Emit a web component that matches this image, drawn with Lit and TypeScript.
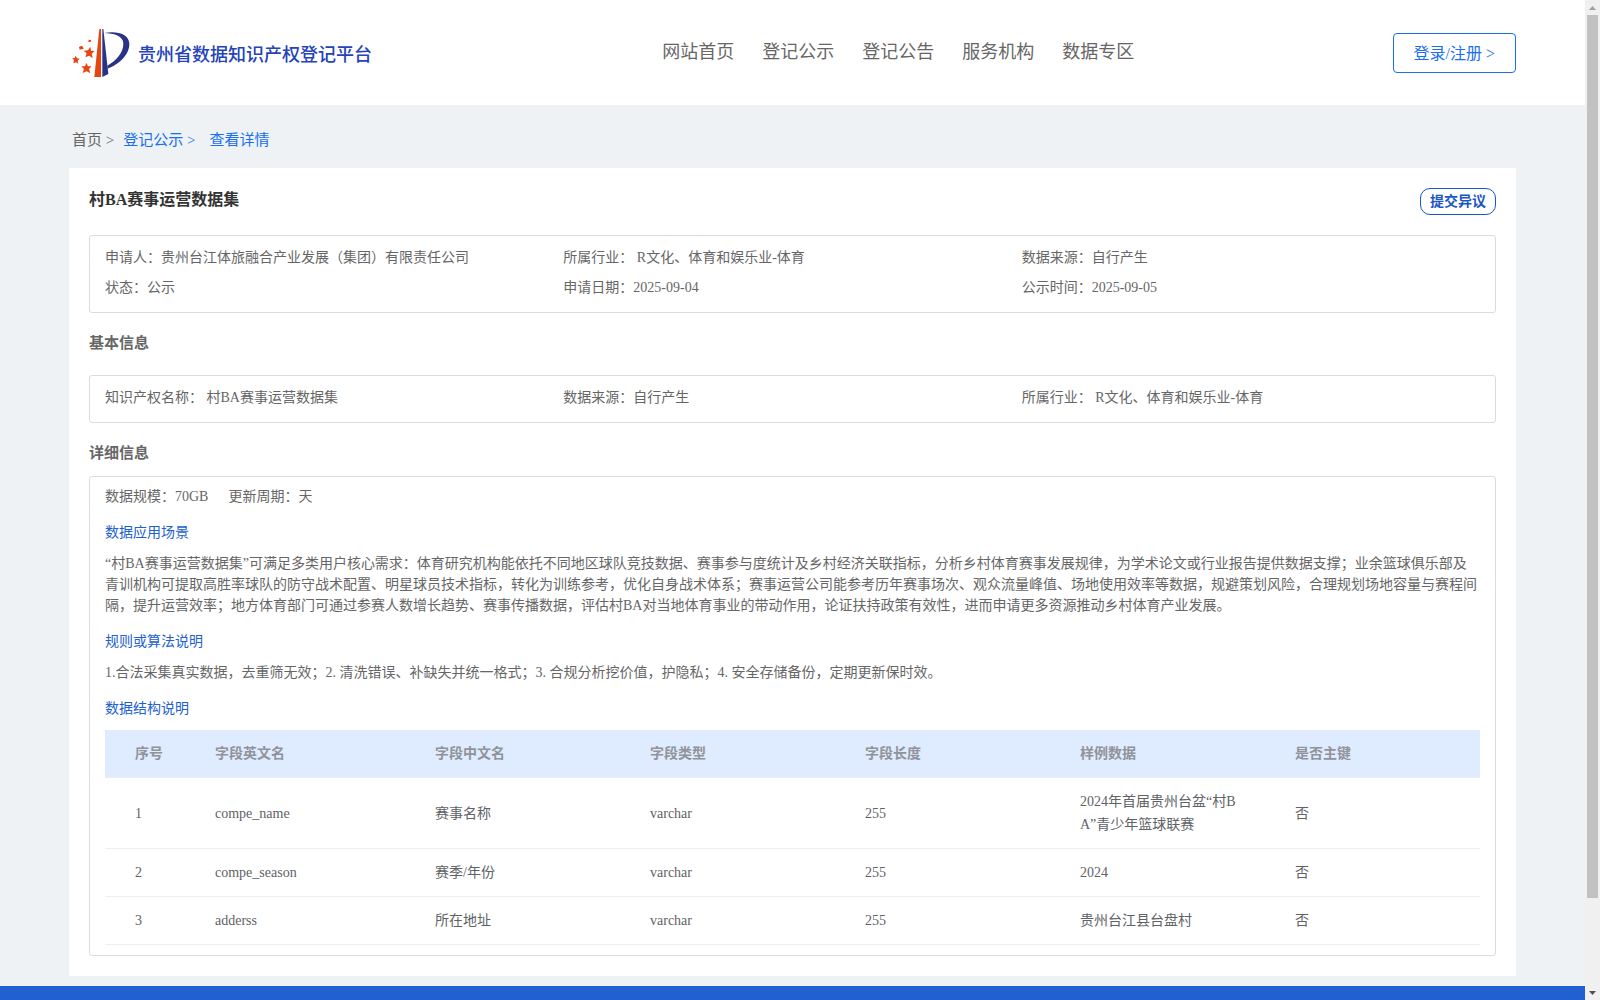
import { LitElement, html, css } from "lit";
import { customElement } from "lit/decorators.js";

interface Fact {
  label: string;
  value: string;
}

const NAV = ["网站首页", "登记公示", "登记公告", "服务机构", "数据专区"];

const SUMMARY: Fact[] = [
  { label: "申请人：", value: "贵州台江体旅融合产业发展（集团）有限责任公司" },
  { label: "所属行业：", value: " R文化、体育和娱乐业-体育" },
  { label: "数据来源：", value: "自行产生" },
  { label: "状态：", value: "公示" },
  { label: "申请日期：", value: "2025-09-04" },
  { label: "公示时间：", value: "2025-09-05" },
];

const BASIC: Fact[] = [
  { label: "知识产权名称：", value: " 村BA赛事运营数据集" },
  { label: "数据来源：", value: "自行产生" },
  { label: "所属行业：", value: " R文化、体育和娱乐业-体育" },
];

const COLUMNS = ["序号", "字段英文名", "字段中文名", "字段类型", "字段长度", "样例数据", "是否主键"];

const ROWS = [
  ["1", "compe_name", "赛事名称", "varchar", "255", "2024年首届贵州台盆“村BA”青少年篮球联赛", "否"],
  ["2", "compe_season", "赛季/年份", "varchar", "255", "2024", "否"],
  ["3", "adderss", "所在地址", "varchar", "255", "贵州台江县台盘村", "否"],
];

@customElement("fact-grid")
class FactGrid extends LitElement {
  static properties = { facts: { attribute: false } };
  declare facts: Fact[];

  static styles = css`
    :host {
      display: block;
      border: 1px solid #dcdcdc;
      border-radius: 3px;
      padding: 7px 15px 9px;
    }
    .facts {
      display: grid;
      grid-template-columns: repeat(3, 1fr);
      margin: 0;
      line-height: 30px;
      white-space: pre-wrap;
    }
    .fact {
      display: flex;
    }
    .label,
    .value {
      margin: 0;
    }
  `;

  render() {
    return html`<dl class="facts">
      ${this.facts.map(
        (f) => html`<div class="fact"><dt class="label">${f.label}</dt><dd class="value">${f.value}</dd></div>`
      )}
    </dl>`;
  }
}

@customElement("scroll-rail")
class ScrollRail extends LitElement {
  static styles = css`
    :host {
      display: flex;
      flex-direction: column;
      align-items: center;
      background: #f0f0f0;
    }
    .arrow {
      display: block;
      flex: none;
      width: 15px;
      height: 15px;
    }
    .track {
      flex: 1;
      width: 11px;
    }
    .thumb {
      height: 91%;
      background: #c1c1c1;
    }
  `;

  render() {
    return html`
      <svg class="arrow" viewBox="0 0 15 15"><path d="M4 10 L7.5 6 L11 10 Z" fill="#a0a0a0" /></svg>
      <div class="track"><div class="thumb"></div></div>
      <svg class="arrow" viewBox="0 0 15 15"><path d="M4 6 L7.5 10 L11 6 Z" fill="#505050" /></svg>
    `;
  }
}

@customElement("app-root")
class AppRoot extends LitElement {
  static styles = css`
    :host {
      display: grid;
      grid-template-columns: minmax(0, 1fr) 15px;
      height: 100vh;
      overflow: hidden;
      font-family: "Liberation Serif", "Noto Sans CJK SC", serif;
      font-size: 14px;
      color: #666;
      background: #eef2f5;
    }
    .page {
      display: flex;
      flex-direction: column;
      min-height: 0;
    }
    .header {
      display: flex;
      flex: none;
      align-items: center;
      justify-content: space-between;
      box-sizing: border-box;
      height: 105px;
      padding: 0 69px 0 72px;
      background: #fff;
    }
    .brand {
      display: flex;
      flex: 17 0 0;
      align-items: center;
      gap: 8px;
      color: #2443b8;
      font-size: 18px;
      font-weight: 500;
      text-decoration: none;
    }
    .logo {
      width: 58px;
      height: 50px;
    }
    .nav {
      display: flex;
      gap: 28px;
      padding-bottom: 2px;
    }
    .nav-link {
      color: #666;
      font-size: 18px;
      line-height: 24px;
      text-decoration: none;
    }
    .account {
      display: flex;
      flex: 11 0 0;
      justify-content: flex-end;
    }
    .login {
      height: 40px;
      padding: 0 20px 2px;
      border: 1px solid #1a6ef0;
      border-radius: 4px;
      background: #fff;
      color: #1a6ef0;
      font-family: inherit;
      font-size: 16px;
    }
    .crumbs {
      display: flex;
      flex: none;
      align-items: center;
      padding: 25px 69px 18px 72px;
      font-size: 15px;
      line-height: 20px;
      white-space: pre;
    }
    .crumb {
      color: #1a6ef0;
      text-decoration: none;
    }
    .crumb-home {
      margin-right: 9px;
      color: #666;
    }
    .crumb-list {
      margin-right: 14px;
    }
    .card {
      flex: none;
      margin: 0 69px 10px;
      padding: 20px;
      background: #fff;
    }
    .title-row {
      display: flex;
      align-items: flex-start;
      justify-content: space-between;
      margin-bottom: 20px;
    }
    .title {
      margin: 0;
      color: #333;
      font-size: 16px;
      line-height: 24px;
    }
    .objection {
      height: 27px;
      padding: 0 9px 4px;
      border: 1px solid #1a56c4;
      border-radius: 10px;
      background: #fff;
      color: #1a56c4;
      font-family: inherit;
      font-size: 14px;
      font-weight: 700;
    }
    .section {
      margin: 20px 0 22px;
      font-size: 15px;
      line-height: 20px;
    }
    .section-detail {
      margin-bottom: 13px;
    }
    .detail {
      padding: 10px 15px;
      border: 1px solid #dcdcdc;
      border-radius: 3px;
    }
    .scale {
      display: flex;
      gap: 20px;
      line-height: 20px;
    }
    .topic {
      margin: 15px 0 10px;
      color: #2160d0;
      font-size: 14px;
      font-weight: 400;
      line-height: 21px;
    }
    .text {
      margin: 0;
      line-height: 21px;
    }
    .fields {
      width: 100%;
      margin-top: 11px;
      border-collapse: separate;
      border-spacing: 0;
      table-layout: fixed;
      color: #606266;
      line-height: 23px;
      text-align: left;
    }
    .col-index {
      width: 80px;
    }
    .col-name {
      width: 16%;
    }
    .head,
    .cell {
      padding: 12px 24px 12px 30px;
      border-bottom: 1px solid #ebeef5;
      word-break: break-all;
    }
    .head {
      padding-right: 0;
      background: #dfecff;
      color: #909399;
    }
    .head:first-child,
    .cell:first-child {
      padding-right: 0;
    }
    .footer {
      flex: 1;
      background: #2160d0;
    }
  `;

  private logo() {
    return html`<svg class="logo" viewBox="36 24 174 150" aria-hidden="true">
      <path d="M118 27 H123 V171 H103 Z" fill="#e5450f" />
      <path d="M127 27 H130 L145 162 L127 171 Z" fill="#2a3286" />
      <path
        d="M133 39 C168 32 208 40 208 72 C208 107 174 134 143 146 L142 137 C166 124 191 100 190 70 C189 46 160 40 133 39 Z"
        fill="#2a3286"
      />
      <g fill="#e5450f">
        <path d="M91 80 L93 92 L104 93 L95 101 L98 114 L87 107 L76 112 L80 100 L71 92 L84 91 Z" />
        <path d="M47 107 L51 115 L59 116 L53 122 L55 131 L48 127 L40 130 L42 121 L37 115 L44 114 Z" />
        <path d="M79 129 L84 139 L95 139 L87 147 L91 160 L80 154 L68 159 L72 147 L64 139 L75 139 Z" />
        <path d="M65 77 L69 81 L71 87 L63 88 L59 89 L57 81 Z" />
        <path d="M86 59 L93 60 L92 66 L85 66 Z" />
      </g>
    </svg>`;
  }

  render() {
    return html`
      <div class="page">
        <header class="header">
          <a class="brand" href="#">${this.logo()}<span>贵州省数据知识产权登记平台</span></a>
          <nav class="nav">${NAV.map((n) => html`<a class="nav-link" href="#">${n}</a>`)}</nav>
          <div class="account"><button class="login" type="button">登录/注册 &gt;</button></div>
        </header>
        <nav class="crumbs">
          <a class="crumb crumb-home" href="#">首页 &gt;</a><a class="crumb crumb-list" href="#">登记公示 &gt;</a
          ><a class="crumb" href="#">查看详情</a>
        </nav>
        <main class="card">
          <div class="title-row">
            <h1 class="title">村BA赛事运营数据集</h1>
            <button class="objection" type="button">提交异议</button>
          </div>
          <fact-grid .facts=${SUMMARY}></fact-grid>
          <h2 class="section">基本信息</h2>
          <fact-grid .facts=${BASIC}></fact-grid>
          <h2 class="section section-detail">详细信息</h2>
          <section class="detail">
            <div class="scale"><span>数据规模：70GB</span><span>更新周期：天</span></div>
            <h3 class="topic">数据应用场景</h3>
            <p class="text">“村BA赛事运营数据集”可满足多类用户核心需求：体育研究机构能依托不同地区球队竞技数据、赛事参与度统计及乡村经济关联指标，分析乡村体育赛事发展规律，为学术论文或行业报告提供数据支撑；业余篮球俱乐部及青训机构可提取高胜率球队的防守战术配置、明星球员技术指标，转化为训练参考，优化自身战术体系；赛事运营公司能参考历年赛事场次、观众流量峰值、场地使用效率等数据，规避策划风险，合理规划场地容量与赛程间隔，提升运营效率；地方体育部门可通过参赛人数增长趋势、赛事传播数据，评估村BA对当地体育事业的带动作用，论证扶持政策有效性，进而申请更多资源推动乡村体育产业发展。</p>
            <h3 class="topic">规则或算法说明</h3>
            <p class="text">1.合法采集真实数据，去重筛无效；2. 清洗错误、补缺失并统一格式；3. 合规分析挖价值，护隐私；4. 安全存储备份，定期更新保时效。</p>
            <h3 class="topic">数据结构说明</h3>
            <table class="fields">
              <colgroup>
                <col class="col-index" />
                <col class="col-name" />
                <col span="5" />
              </colgroup>
              <thead>
                <tr>
                  ${COLUMNS.map((c) => html`<th class="head" scope="col">${c}</th>`)}
                </tr>
              </thead>
              <tbody>
                ${ROWS.map((r) => html`<tr>${r.map((c) => html`<td class="cell">${c}</td>`)}</tr>`)}
              </tbody>
            </table>
          </section>
        </main>
        <footer class="footer"></footer>
      </div>
      <scroll-rail aria-hidden="true"></scroll-rail>
    `;
  }
}
